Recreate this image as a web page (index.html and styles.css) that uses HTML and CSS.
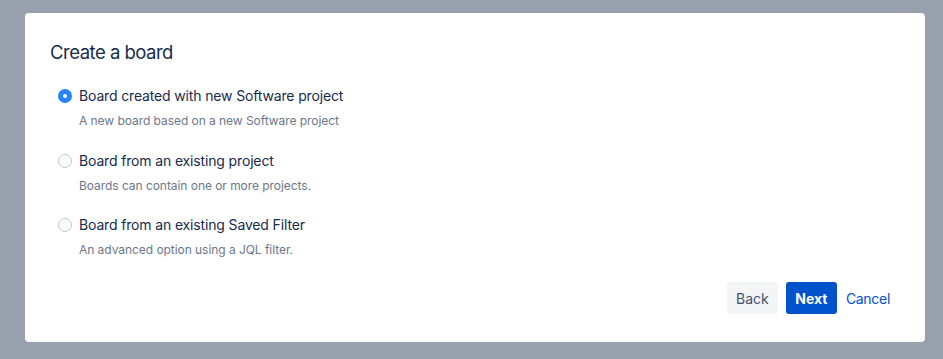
FILE: index.html
```html
<!DOCTYPE html>
<html lang="en">
<head>
<meta charset="UTF-8" />
<title>Create a board</title>
<link rel="stylesheet" href="styles.css">
</head>
<body>

<div class="dialog">
  <h2 class="dialog-title">Create a board</h2>

  <div class="options">
    <label class="option">
      <input type="radio" name="board-type" checked />
      <span class="radio"></span>
      <span class="option-text">
        <span class="option-label">Board created with new Software project</span>
        <span class="option-desc">A new board based on a new Software project</span>
      </span>
    </label>

    <label class="option">
      <input type="radio" name="board-type" />
      <span class="radio"></span>
      <span class="option-text">
        <span class="option-label">Board from an existing project</span>
        <span class="option-desc">Boards can contain one or more projects.</span>
      </span>
    </label>

    <label class="option">
      <input type="radio" name="board-type" />
      <span class="radio"></span>
      <span class="option-text">
        <span class="option-label">Board from an existing Saved Filter</span>
        <span class="option-desc">An advanced option using a JQL filter.</span>
      </span>
    </label>
  </div>

  <div class="dialog-footer">
    <button class="btn btn-back">Back</button>
    <button class="btn btn-next">Next</button>
    <button class="btn btn-cancel">Cancel</button>
  </div>
</div>

</body>
</html>
```

FILE: styles.css
```css
:root {
  --overlay: #97a0ac;
  --text-dark: #172b4d;
  --text-subtle: #6b778c;
  --blue: #0052cc;
  --blue-light: #2684ff;
}
body {
  margin: 0;
  padding: 13px 18px 17px 25px;
  background: var(--overlay);
  font-family: Inter, 'Noto Sans', sans-serif;
  color: var(--text-dark);
}
.dialog {
  background: white;
  border-radius: 4px;
  padding: 27px 35px 28px 25px;
  height: 329px;
  box-sizing: border-box;
  display: flex;
  flex-direction: column;
}
.dialog-title {
  margin: 0 0 22px 0;
  font-size: 18.5px;
  font-weight: 400;
  line-height: 24px;
  letter-spacing: -0.5px;
}
.options {
  display: flex;
  flex-direction: column;
  gap: 21.5px;
  padding-left: 8px;
}
.option {
  display: flex;
  align-items: flex-start;
  gap: 7px;
  cursor: pointer;
}
.option input {
  display: none;
}
.radio {
  width: 14px;
  height: 14px;
  box-sizing: border-box;
  border-radius: 50%;
  border: 1px solid #c1c7d0;
  background: #fafbfc;
  margin-top: 3px;
  flex-shrink: 0;
}
.option input:checked + .radio {
  border: none;
  background: var(--blue-light);
  position: relative;
}
.option input:checked + .radio::after {
  content: '';
  position: absolute;
  left: 5px;
  top: 5px;
  width: 4px;
  height: 4px;
  border-radius: 50%;
  background: white;
}
.option-text {
  display: flex;
  flex-direction: column;
}
.option-label {
  font-size: 14px;
  line-height: 20px;
  letter-spacing: -0.15px;
}
.option-desc {
  margin-top: 6px;
  font-size: 12px;
  line-height: 17px;
  letter-spacing: -0.05px;
  color: var(--text-subtle);
}
.dialog-footer {
  margin-top: auto;
  display: flex;
  justify-content: flex-end;
  align-items: center;
  gap: 8px;
}
.btn {
  border: none;
  font-family: inherit;
  font-size: 14px;
  height: 32px;
  padding: 0;
  border-radius: 3px;
  cursor: pointer;
}
.btn-back {
  background: #f4f5f7;
  color: #42526e;
  width: 51px;
}
.btn-next {
  background: var(--blue);
  color: white;
  font-weight: 700;
  width: 51px;
}
.btn-cancel {
  background: none;
  color: var(--blue);
  letter-spacing: -0.3px;
  margin-left: 1px;
}
```
